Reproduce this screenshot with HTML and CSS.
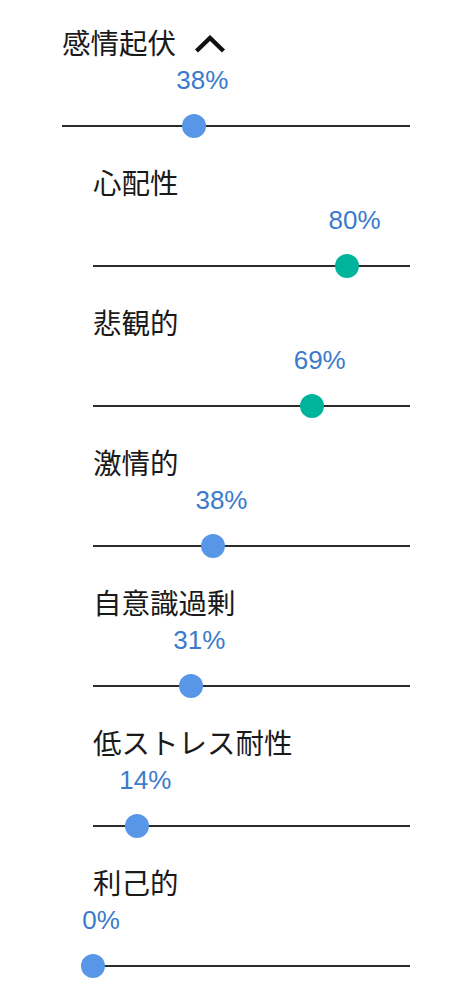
FILE: index.html
```html
<!DOCTYPE html>
<html lang="ja">
<head>
<meta charset="utf-8">
<link rel="stylesheet" href="styles.css">
</head>
<body>
<div class="panel">
  <div class="item">
    <div class="title">感情起伏<svg class="chev" width="32" height="18" viewBox="0 0 32 18"><path d="M2.5 16 L16 3 L29.5 16" fill="none" stroke="#111" stroke-width="4.4" stroke-linecap="butt" stroke-linejoin="miter"/></svg></div>
    <div class="value" style="--p:38%"><span>38%</span></div>
    <div class="track" style="--p:38%"><span class="thumb"></span></div>
  </div>
  <div class="item sub">
    <div class="title">心配性</div>
    <div class="value" style="--p:80%"><span>80%</span></div>
    <div class="track" style="--p:80%"><span class="thumb high"></span></div>
  </div>
  <div class="item sub">
    <div class="title">悲観的</div>
    <div class="value" style="--p:69%"><span>69%</span></div>
    <div class="track" style="--p:69%"><span class="thumb high"></span></div>
  </div>
  <div class="item sub">
    <div class="title">激情的</div>
    <div class="value" style="--p:38%"><span>38%</span></div>
    <div class="track" style="--p:38%"><span class="thumb"></span></div>
  </div>
  <div class="item sub">
    <div class="title">自意識過剰</div>
    <div class="value" style="--p:31%"><span>31%</span></div>
    <div class="track" style="--p:31%"><span class="thumb"></span></div>
  </div>
  <div class="item sub">
    <div class="title">低ストレス耐性</div>
    <div class="value" style="--p:14%"><span>14%</span></div>
    <div class="track" style="--p:14%"><span class="thumb"></span></div>
  </div>
  <div class="item sub">
    <div class="title">利己的</div>
    <div class="value" style="--p:0%"><span>0%</span></div>
    <div class="track" style="--p:0%"><span class="thumb"></span></div>
  </div>
</div>
</body>
</html>
```
FILE: styles.css
```css
html, body {
  margin: 0;
  padding: 0;
  background: #fff;
}
.panel {
  width: 348px;
  margin-left: 62px;
  padding-top: 27px;
  display: flex;
  flex-direction: column;
}
.item {
  display: flex;
  flex-direction: column;
  margin-bottom: 29px;
}
.item.sub {
  margin-left: 31px;
}
.title {
  height: 30px;
  line-height: 30px;
  font-family: "Noto Sans CJK JP", sans-serif;
  font-size: 28.5px;
  color: #1a1a1a;
  display: flex;
  align-items: center;
  white-space: nowrap;
}
.chev {
  margin-left: 18px;
  margin-top: 4px;
}
.value {
  position: relative;
  height: 30px;
  margin-top: 8px;
}
.value span {
  position: absolute;
  top: 0;
  left: calc(var(--p) + 8px);
  transform: translateX(-50%);
  line-height: 30px;
  font-family: "Liberation Sans", Arial, sans-serif;
  font-size: 26px;
  color: #3b7bcb;
  white-space: nowrap;
}
.track {
  position: relative;
  height: 24px;
  margin-top: 19px;
}
.track::before {
  content: "";
  position: absolute;
  left: 0;
  right: 0;
  top: 11px;
  height: 2px;
  background: #2b2b2b;
}
.thumb {
  position: absolute;
  top: 0;
  left: calc(var(--p) - 12px);
  width: 24px;
  height: 24px;
  border-radius: 50%;
  background: #5897e8;
}
.thumb.high {
  background: #00b39b;
}
```
